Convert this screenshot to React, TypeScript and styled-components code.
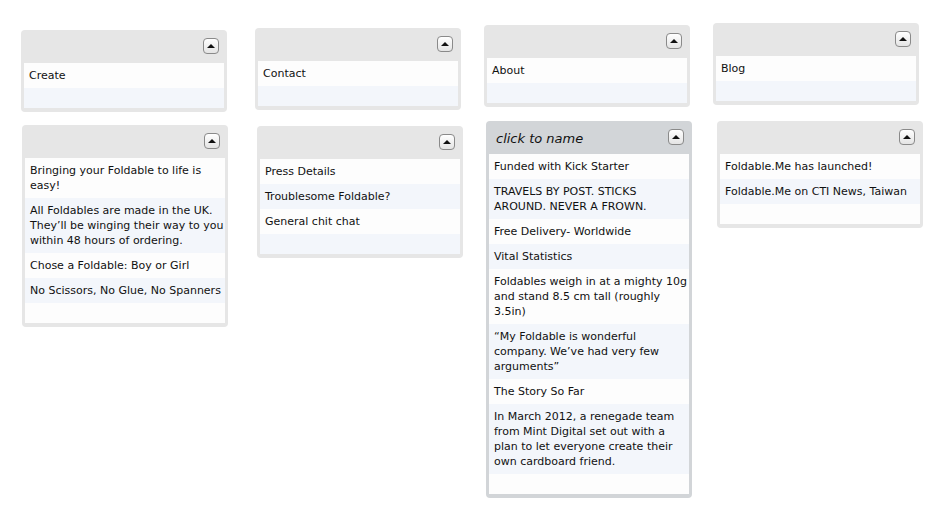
import React from "react";
import styled, { createGlobalStyle, css } from "styled-components";

const GlobalStyle = createGlobalStyle`
  html, body {
    margin: 0;
    padding: 0;
    background: #ffffff;
    font-family: "DejaVu Sans", Verdana, sans-serif;
    color: #111;
  }
`;

interface ICard {
  title?: string;
  items: string[];
  active?: boolean;
  dx?: number;
  dy?: number;
}

const columns: { width: number; cards: ICard[] }[] = [
  {
    width: 211,
    cards: [
      { items: ["Create"], dy: 30 },
      {
        items: [
          "Bringing your Foldable to life is easy!",
          "All Foldables are made in the UK. They’ll be winging their way to you within 48 hours of ordering.",
          "Chose a Foldable: Boy or Girl",
          "No Scissors, No Glue, No Spanners",
        ],
        dx: 1,
        dy: 13,
      },
    ],
  },
  {
    width: 206,
    cards: [
      { items: ["Contact"], dy: 28 },
      {
        items: ["Press Details", "Troublesome Foldable?", "General chit chat"],
        dx: 2,
        dy: 16,
      },
    ],
  },
  {
    width: 206,
    cards: [
      { items: ["About"], dy: 25 },
      {
        title: "click to name",
        active: true,
        items: [
          "Funded with Kick Starter",
          "TRAVELS BY POST. STICKS AROUND. NEVER A FROWN.",
          "Free Delivery- Worldwide",
          "Vital Statistics",
          "Foldables weigh in at a mighty 10g and stand 8.5 cm tall (roughly 3.5in)",
          "“My Foldable is wonderful company. We’ve had very few arguments”",
          "The Story So Far",
          "In March 2012, a renegade team from Mint Digital set out with a plan to let everyone create their own cardboard friend.",
        ],
        dx: 2,
        dy: 14,
      },
    ],
  },
  {
    width: 206,
    cards: [
      { items: ["Blog"], dy: 23 },
      {
        items: ["Foldable.Me has launched!", "Foldable.Me on CTI News, Taiwan"],
        dx: 4,
        dy: 16,
      },
    ],
  },
];

// layout
const Board = styled.div({
  display: "flex",
  flexDirection: "row",
  alignItems: "flex-start",
  gap: "23px",
  paddingLeft: "21px",
});

const Column = styled.div<{ $width: number }>`
  width: ${(p) => p.$width}px;
  display: flex;
  flex-direction: column;
`;

const CardBox = styled.div<{ $active?: boolean; $dx: number; $dy: number }>`
  width: 206px;
  box-sizing: border-box;
  margin-left: ${(p) => p.$dx}px;
  margin-top: ${(p) => p.$dy}px;
  padding: 0 3px 4px;
  border-radius: 4px;
  background: ${(p) => (p.$active ? "#d2d5d8" : "#e6e6e6")};
`;

const CardHeader = styled.div({
  height: "33px",
  display: "flex",
  alignItems: "center",
  justifyContent: "space-between",
  padding: "0 5px 0 7px",
});

const CardTitle = styled.span({
  fontStyle: "italic",
  fontSize: "13px",
  color: "#111",
  paddingTop: "2px",
});

const ToggleButton = styled.button({
  marginLeft: "auto",
  marginTop: "-1px",
  width: "16px",
  height: "16px",
  padding: 0,
  boxSizing: "border-box",
  border: "1px solid #8a8a8a",
  borderRadius: "4px",
  background: "linear-gradient(#ffffff, #e4e4e4)",
  display: "flex",
  alignItems: "center",
  justifyContent: "center",
  "&::after": {
    content: '""',
    borderLeft: "4px solid transparent",
    borderRight: "4px solid transparent",
    borderBottom: "4px solid #111",
    marginTop: "-1px",
  },
});

const alt = css<{ $odd: boolean }>`
  background: ${(p) => (p.$odd ? "#f3f6fb" : "#fdfdfd")};
`;

const Item = styled.div<{ $odd: boolean }>`
  ${alt};
  padding: 5px 1px 5px 5px;
  font-size: 11px;
  line-height: 15px;
`;

const EmptyItem = styled.div<{ $odd: boolean }>`
  ${alt};
  height: 20px;
`;

const Card = ({ title, items, active, dx = 0, dy = 0 }: ICard) => (
  <CardBox $active={active} $dx={dx} $dy={dy}>
    <CardHeader>
      {title && <CardTitle>{title}</CardTitle>}
      <ToggleButton aria-label="collapse" />
    </CardHeader>
    {items.map((text, idx) => (
      <Item key={idx} $odd={idx % 2 === 1}>
        {text}
      </Item>
    ))}
    <EmptyItem $odd={items.length % 2 === 1} />
  </CardBox>
);

const App = () => (
  <>
    <GlobalStyle />
    <Board>
      {columns.map((col, ci) => (
        <Column key={ci} $width={col.width}>
          {col.cards.map((card, i) => (
            <Card key={i} {...card} />
          ))}
        </Column>
      ))}
    </Board>
  </>
);

export default App;
